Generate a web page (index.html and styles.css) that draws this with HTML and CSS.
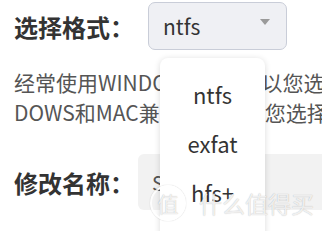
FILE: index.html
```html
<!DOCTYPE html>
<html lang="zh">
<head>
<meta charset="utf-8">
<link rel="stylesheet" href="styles.css">
</head>
<body>
<div class="page">
  <div class="row row-format">
    <span class="label">选择格式：</span>
    <div class="select">
      <span class="select-value">ntfs</span>
      <span class="caret"></span>
    </div>
  </div>
  <p class="desc">
    <span class="line">经常使用WINDOWS系统所以您选择ntfs格式，如果同时使用WIN</span>
    <span class="line">DOWS和MAC兼容的，推荐您选择exfat格式</span>
  </p>
  <div class="row row-name">
    <span class="label">修改名称：</span>
    <div class="input"><span class="input-text">S</span></div>
  </div>
</div>
<ul class="menu">
  <li>ntfs</li>
  <li>exfat</li>
  <li>hfs+</li>
</ul>
<div class="watermark">
  <span class="wm-badge">值</span>
  <span class="wm-text">什么值得买</span>
</div>
</body>
</html>
```
FILE: styles.css
```css
html, body {
  margin: 0;
  padding: 0;
}
body {
  width: 322px;
  height: 231px;
  overflow: hidden;
  position: relative;
  background: #ffffff;
  font-family: "Noto Sans CJK SC", "Noto Sans", sans-serif;
  color: #333333;
}
.page {
  padding-left: 14px;
  width: 600px;
}
.row {
  display: flex;
  align-items: center;
}
.row-format {
  padding-top: 2px;
  height: 48px;
}
.label {
  font-size: 24px;
  font-weight: bold;
  color: #333333;
  width: 134px;
  flex: none;
}
.select {
  width: 139px;
  height: 48px;
  box-sizing: border-box;
  border: 1px solid #c9cdd8;
  border-radius: 7px;
  background: #eff0f4;
  display: flex;
  align-items: center;
  justify-content: space-between;
  padding: 0 16px 0 14px;
}
.select-value {
  font-size: 21px;
  color: #333333;
}
.caret {
  width: 0;
  height: 0;
  border-left: 5px solid transparent;
  border-right: 5px solid transparent;
  border-top: 6px solid #9a9a9a;
  margin-top: -8px;
}
.desc {
  margin: 17px 0 0 0;
  font-size: 21px;
  line-height: 30px;
  color: #555555;
}
.line {
  display: block;
  white-space: nowrap;
}
.row-name {
  margin-top: 27px;
  height: 56px;
}
.input {
  flex: none;
  width: 300px;
  height: 56px;
  margin-left: -10px;
  background: #f2f2f2;
  border-radius: 6px;
  display: flex;
  align-items: center;
  padding-left: 14px;
  font-size: 20px;
  color: #555;
}
.menu {
  position: absolute;
  left: 160px;
  top: 58px;
  width: 105px;
  height: 190px;
  margin: 0;
  padding: 12px 0 0 0;
  list-style: none;
  background: #ffffff;
  border-radius: 8px;
  box-shadow: 0 1px 6px rgba(0, 0, 0, 0.15);
}
.menu li {
  height: 49px;
  line-height: 49px;
  font-size: 22px;
  color: #333333;
  text-align: center;
}
.watermark {
  position: absolute;
  left: 150px;
  top: 185px;
  display: flex;
  align-items: center;
  gap: 13px;
  color: rgba(255, 255, 255, 0.8);
  text-shadow: 0 0 1px rgba(0,0,0,0.3);
  pointer-events: none;
}
.wm-badge {
  width: 32px;
  height: 32px;
  border-radius: 50%;
  border: 2px solid rgba(255,255,255,0.85);
  box-shadow: 0 0 1px rgba(0,0,0,0.3);
  display: flex;
  align-items: center;
  justify-content: center;
  font-size: 21px;
}
.wm-text {
  font-size: 23px;
  letter-spacing: 0;
}
```
